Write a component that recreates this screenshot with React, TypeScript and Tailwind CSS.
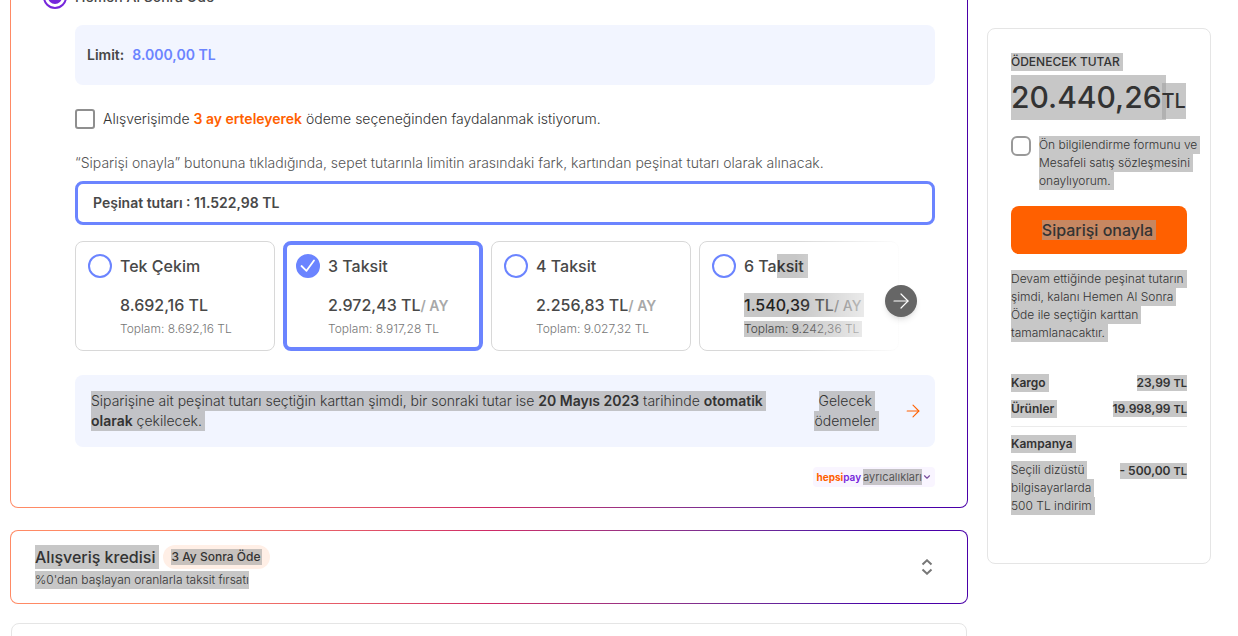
import type { ReactNode } from "react";
import { ArrowRight, ChevronDown } from "lucide-react";

/* A line of text carrying the selection highlight. */
function Sel({ children, className = "pr-[3px]" }: { children: ReactNode; className?: string }) {
  return <span className={`block w-fit bg-[#a1a1a1]/60 whitespace-nowrap ${className}`}>{children}</span>;
}

function GradientCard({ children, className = "" }: { children: ReactNode; className?: string }) {
  return (
    <section
      className={`rounded-lg bg-linear-to-r from-[#ff8a65] from-15% via-[#cf2a66] via-50% to-[#4a00a8] to-90% p-px ${className}`}
    >
      <div className="rounded-[7px] bg-white">{children}</div>
    </section>
  );
}

type Plan = { title: ReactNode; price: ReactNode; total: ReactNode; id: string };

const plans: Plan[] = [
  { id: "p1", title: "Tek Çekim", price: "8.692,16 TL", total: "Toplam: 8.692,16 TL" },
  { id: "p3", title: "3 Taksit", price: <>2.972,43 TL<PerMonth /></>, total: "Toplam: 8.917,28 TL" },
  { id: "p4", title: "4 Taksit", price: <>2.256,83 TL<PerMonth /></>, total: "Toplam: 9.027,32 TL" },
  {
    id: "p6",
    title: <span className="flex">6 Ta<Sel className="pr-1 text-[#333]">ksit</Sel></span>,
    price: <Sel className="pr-[3px] text-[#222]">1.540,39 TL<PerMonth selected /></Sel>,
    total: <Sel className="pr-[3px] text-[#444]">Toplam: 9.242,36 TL</Sel>,
  },
];

function PerMonth({ selected = false }: { selected?: boolean }) {
  return <span className={`text-sm ${selected ? "text-[#555]" : "font-semibold text-[#a8a8a8]"}`}>/ AY</span>;
}

function PlanCard({ plan }: { plan: Plan }) {
  const selected = plan.id === "p3";
  return (
    <label
      className={`flex h-[110px] w-[200px] shrink-0 items-start gap-2 rounded-lg bg-white ${
        selected ? "border-4 border-[#6b84ff] px-[9px] pt-[9px]" : "border border-[#d8d8d8] px-3 pt-3"
      }`}
    >
      <span className="grid shrink-0 place-items-center">
        <input
          type="radio"
          name="plan"
          defaultChecked={selected}
          className="peer col-start-1 row-start-1 size-6 appearance-none rounded-full border-2 border-[#6b84ff] checked:bg-[#6b84ff]"
        />
        <svg
          viewBox="0 0 24 24"
          fill="none"
          stroke="currentColor"
          strokeWidth="1.8"
          strokeLinecap="round"
          strokeLinejoin="round"
          className="pointer-events-none col-start-1 row-start-1 hidden size-6 text-white peer-checked:block"
        >
          <path d="m5.500 12 5 4.800L18 6.500" />
        </svg>
      </span>
      <span className="text-base font-medium leading-6 text-[#484848]">
        <span className="block">{plan.title}</span>
        <span className="mt-[15px] block">{plan.price}</span>
        <span className="mt-1 block text-xs font-light leading-4 text-[#777]">{plan.total}</span>
      </span>
    </label>
  );
}

function Logo() {
  return (
    <span className="text-[10px] font-bold leading-4 text-[#ff6000]">
      hepsi<span className="font-semibold text-[#7626db]">pay</span>
    </span>
  );
}

function Amount({ children }: { children: ReactNode }) {
  return (
    <Sel className="leading-[15px]">
      {children} <span className="text-[11px]">TL</span>
    </Sel>
  );
}

function Summary() {
  return (
    <aside className="mt-7 h-[536px] w-[224px] shrink-0 rounded-lg border border-[#e5e5e5] px-[23px] pt-6 text-xs leading-[18px] text-[#333]">
      <h2 className="font-medium">
        <Sel>ÖDENECEK TUTAR</Sel>
      </h2>
      <p className="mt-1 flex items-end font-medium text-[#333]">
        <Sel className="pr-1 text-[30px] leading-[45px]">20.440,26</Sel>
        <Sel className="-ml-1 mb-px leading-9 text-xl">TL</Sel>
      </p>
      <div className="mt-4 flex gap-2">
        <input id="terms" type="checkbox" className="size-5 shrink-0 appearance-none rounded-md border-2 border-[#999]" />
        <label htmlFor="terms" className="font-light">
          <Sel>Ön bilgilendirme formunu ve</Sel>
          <Sel>Mesafeli satış sözleşmesini</Sel>
          <Sel>onaylıyorum.</Sel>
        </label>
      </div>
      <button className="mt-4 flex h-12 w-full items-center justify-center rounded-lg bg-[#ff6000] text-base font-medium text-[#333]">
        <Sel className="pr-[3px] leading-5">Siparişi onayla</Sel>
      </button>
      <p className="mt-4 font-light">
        <Sel>Devam ettiğinde peşinat tutarın</Sel>
        <Sel>şimdi, kalanı Hemen Al Sonra</Sel>
        <Sel>Öde ile seçtiğin karttan</Sel>
        <Sel>tamamlanacaktır.</Sel>
      </p>
      <dl>
        <div className="mt-8 flex items-center justify-between font-semibold">
          <dt><Sel>Kargo</Sel></dt>
          <dd><Amount>23,99</Amount></dd>
        </div>
        <div className="mt-2 flex items-center justify-between font-semibold">
          <dt><Sel>Ürünler</Sel></dt>
          <dd><Amount>19.998,99</Amount></dd>
        </div>
        <div className="mt-2 border-t border-[#ebebeb] pt-2">
          <dt className="font-semibold"><Sel>Kampanya</Sel></dt>
        </div>
        <div className="mt-2 flex items-start justify-between">
          <dt className="font-light">
            <Sel>Seçili dizüstü</Sel>
            <Sel>bilgisayarlarda</Sel>
            <Sel>500 TL indirim</Sel>
          </dt>
          <dd className="pt-0.5 font-semibold">
            <Amount>- 500,00</Amount>
          </dd>
        </div>
      </dl>
    </aside>
  );
}

export default function App() {
  return (
    <div className="flex h-screen items-start gap-[19px] overflow-hidden bg-white pr-[27px] pl-[10px] font-['Inter',sans-serif] text-[#484848]">
      <main className="min-w-0 grow">
        <GradientCard className="-mt-6">
          <div className="pr-8 pb-5 pl-16">
            <label className="-ml-8 flex items-center gap-2 pt-2 text-sm font-medium leading-6">
              <input
                type="radio"
                name="method"
                defaultChecked
                className="size-6 appearance-none rounded-full border-2 border-[#7626db] bg-[#7626db] bg-clip-content p-[3px]"
              />
              Hemen Al Sonra Öde
            </label>
            <div className="mt-4 flex h-[60px] items-center gap-2 rounded-lg bg-[#f2f5ff] px-3 text-sm font-semibold">
              <span>Limit:</span>
              <span className="text-[#6b84ff]">8.000,00 TL</span>
            </div>
            <label className="mt-6 flex items-center gap-2 text-sm font-light leading-5 text-[#333]">
              <input type="checkbox" className="size-5 shrink-0 appearance-none rounded-[3px] border-2 border-[#8f8f8f]" />
              <span>
                Alışverişimde <b className="font-semibold text-[#ff6000]">3 ay erteleyerek</b> ödeme seçeneğinden faydalanmak
                istiyorum.
              </span>
            </label>
            <p className="mt-6 text-sm font-light leading-5 text-[#555]">
              “Siparişi onayla” butonuna tıkladığında, sepet tutarınla limitin arasındaki fark, kartından peşinat tutarı
              olarak alınacak.
            </p>
            <p className="mt-2 flex h-11 items-center rounded-lg border-3 border-[#6b84ff] px-[15px] text-sm font-semibold">
              Peşinat tutarı : 11.522,98 TL
            </p>
            <div className="relative mt-4">
              <div className="flex gap-2 overflow-hidden">
                {plans.map((p) => (
                  <PlanCard key={p.id} plan={p} />
                ))}
              </div>
              <div className="pointer-events-none absolute inset-y-0 right-[30px] w-[110px] bg-linear-to-r from-white/0 to-white" />
              <button
                aria-label="İleri"
                className="absolute top-11 right-[18px] flex size-8 items-center justify-center rounded-full bg-[#666] text-white shadow-md"
              >
                <ArrowRight className="size-6" strokeWidth={1.2} />
              </button>
            </div>
            <div className="mt-6 flex items-center justify-between rounded-lg bg-[#f2f5ff] py-4 pr-3 pl-4 text-sm font-light leading-5 text-[#333]">
              <p>
                <Sel>
                  Siparişine ait peşinat tutarı seçtiğin karttan şimdi, bir sonraki tutar ise <b className="font-semibold">20 Mayıs 2023</b>{" "}
                  tarihinde <b className="font-semibold">otomatik</b>
                </Sel>
                <Sel><b className="font-semibold">olarak</b> çekilecek.</Sel>
              </p>
              <button className="flex items-center gap-6">
                <span className="flex flex-col items-center">
                  <Sel>Gelecek</Sel>
                  <Sel>ödemeler</Sel>
                </span>
                <ArrowRight className="size-5 text-[#ff6000]" strokeWidth={1.3} />
              </button>
            </div>
            <button className="mt-5 ml-auto flex h-5 items-center rounded bg-[#f9f5ff] px-[3px] text-[11px] text-[#555]">
              <Logo />
              <Sel className="ml-0.5 leading-4">ayrıcalıkları</Sel>
              <ChevronDown className="size-2.5 text-[#7b4fa0]" strokeWidth={2.800} />
            </button>
          </div>
        </GradientCard>
        <GradientCard className="mt-[22px]">
          <div className="flex h-[72px] items-center justify-between px-6">
            <div>
              <div className="flex items-center gap-1 text-[#333]">
                <Sel className="pr-1 text-base font-medium leading-6">Alışveriş kredisi</Sel>
                <span className="rounded-full bg-[#ffefe6] px-2 py-1 text-xs font-medium leading-4">
                  <Sel className="pr-0.5">3 Ay Sonra Öde</Sel>
                </span>
              </div>
              <Sel className="mt-0.5 text-xs font-light leading-[18px] text-[#333]">
                %0'dan başlayan oranlarla taksit fırsatı
              </Sel>
            </div>
            <button aria-label="Genişlet" className="mr-2 text-[#777]">
              <svg width="16" height="16" viewBox="0 0 16 16" fill="none" stroke="currentColor" strokeWidth="2">
                <path d="M3.500 5.500 8 1.300l4.500 4.200M3.500 10.500 8 14.700l4.500-4.200" />
              </svg>
            </button>
          </div>
        </GradientCard>
        <section className="mx-px mt-[19px] h-16 rounded-lg border border-[#e5e5e5]" />
      </main>
      <Summary />
    </div>
  );
}
